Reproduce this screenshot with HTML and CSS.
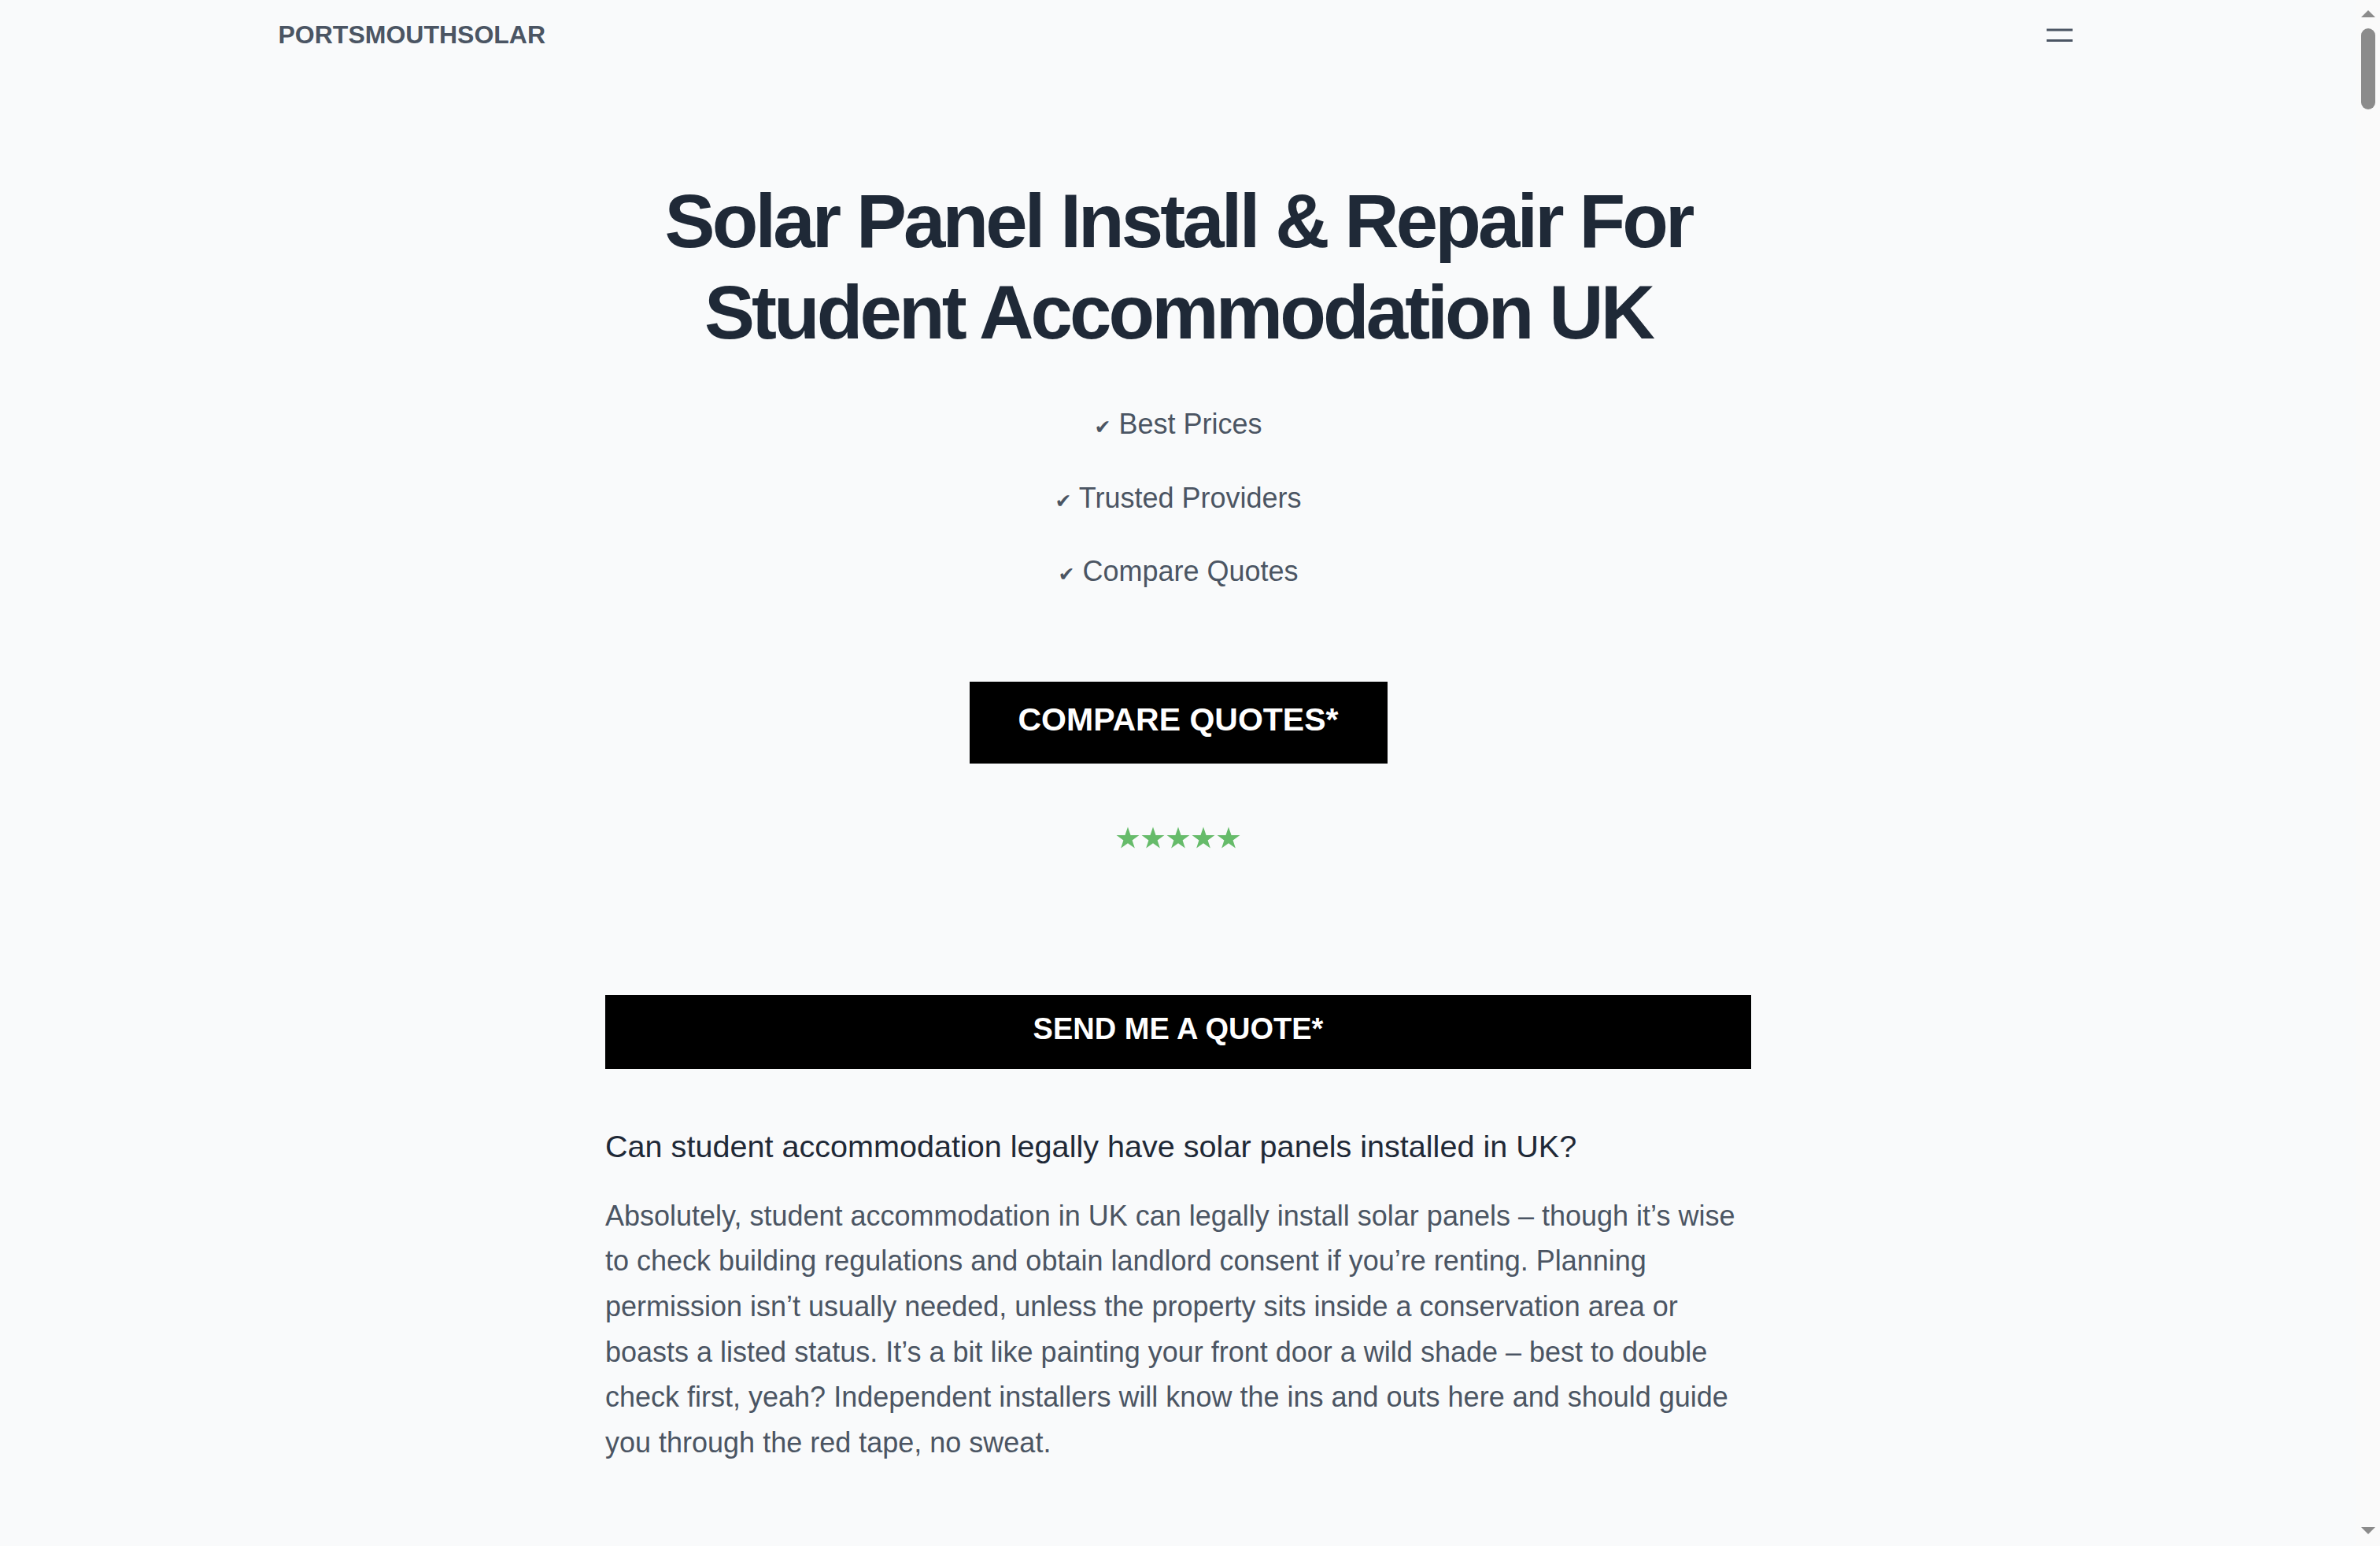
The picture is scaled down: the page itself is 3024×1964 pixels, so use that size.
FILE: index.html
```html
<!DOCTYPE html>
<html lang="en">
<head>
<meta charset="utf-8">
<title>Solar Panel Install &amp; Repair For Student Accommodation UK</title>
<link rel="stylesheet" href="styles.css">
</head>
<body>
<div class="viewport">
  <header class="site-header">
    <nav class="nav">
      <a class="logo" href="#">PORTSMOUTHSOLAR</a>
      <button class="menu-btn" aria-label="Menu">
        <svg class="menu-icon" viewBox="0 0 24 24" fill="none" stroke="currentColor" stroke-width="1.5"><path d="M3.75 9h16.5M3.75 15.75h16.5"/></svg>
      </button>
    </nav>
  </header>
  <main class="page">
    <section class="hero">
      <h1 class="hero-title">Solar Panel Install &amp; Repair For Student Accommodation UK</h1>
      <ul class="perks">
        <li class="perk"><span class="check">✔</span> Best Prices</li>
        <li class="perk"><span class="check">✔</span> Trusted Providers</li>
        <li class="perk"><span class="check">✔</span> Compare Quotes</li>
      </ul>
      <a class="cta" href="#">COMPARE QUOTES*</a>
      <div class="stars" role="img" aria-label="5 out of 5 stars">
        <svg class="star" viewBox="0 0 100 95"><polygon points="50,0 61.8,35.1 98.1,35.1 68.7,56.7 79.4,90.5 50,69.1 20.6,90.5 31.3,56.7 1.9,35.1 38.2,35.1"/></svg>
        <svg class="star" viewBox="0 0 100 95"><polygon points="50,0 61.8,35.1 98.1,35.1 68.7,56.7 79.4,90.5 50,69.1 20.6,90.5 31.3,56.7 1.9,35.1 38.2,35.1"/></svg>
        <svg class="star" viewBox="0 0 100 95"><polygon points="50,0 61.8,35.1 98.1,35.1 68.7,56.7 79.4,90.5 50,69.1 20.6,90.5 31.3,56.7 1.9,35.1 38.2,35.1"/></svg>
        <svg class="star" viewBox="0 0 100 95"><polygon points="50,0 61.8,35.1 98.1,35.1 68.7,56.7 79.4,90.5 50,69.1 20.6,90.5 31.3,56.7 1.9,35.1 38.2,35.1"/></svg>
        <svg class="star" viewBox="0 0 100 95"><polygon points="50,0 61.8,35.1 98.1,35.1 68.7,56.7 79.4,90.5 50,69.1 20.6,90.5 31.3,56.7 1.9,35.1 38.2,35.1"/></svg>
      </div>
    </section>
    <article class="content">
      <a class="quote-bar" href="#">SEND ME A QUOTE*</a>
      <h2 class="question">Can student accommodation legally have solar panels installed in UK?</h2>
      <p class="answer">Absolutely, student accommodation in UK can legally install solar panels – though it’s wise to check building regulations and obtain landlord consent if you’re renting. Planning permission isn’t usually needed, unless the property sits inside a conservation area or boasts a listed status. It’s a bit like painting your front door a wild shade – best to double check first, yeah? Independent installers will know the ins and outs here and should guide you through the red tape, no sweat.</p>
    </article>
  </main>
</div>
<div class="scrollbar" aria-hidden="true">
  <span class="sb-arrow sb-up"></span>
  <span class="sb-thumb"></span>
  <span class="sb-fill"></span>
  <span class="sb-arrow sb-down"></span>
</div>
</body>
</html>
```
FILE: styles.css
```css
html { background: #f9fafb; }
body {
  margin: 0;
  background: #f9fafb;
  font-family: "Liberation Sans", Arial, "DejaVu Sans", sans-serif;
  color: #4b5563;
}
.viewport {
  margin-right: 30px;
  padding-bottom: 400px;
}

/* window scrollbar drawn over the page edge */
.scrollbar {
  position: fixed;
  top: 0;
  right: 0;
  width: 30px;
  height: 100vh;
  background: #fafafa;
  display: flex;
  flex-direction: column;
  align-items: center;
  padding: 13px 0 15px;
  box-sizing: border-box;
}
.sb-arrow {
  width: 0;
  height: 0;
  border-left: 9px solid transparent;
  border-right: 9px solid transparent;
}
.sb-up { border-bottom: 9px solid #8b8b8b; }
.sb-down { border-top: 9px solid #8b8b8b; }
.sb-thumb {
  margin-top: 14px;
  width: 18px;
  height: 103px;
  border-radius: 9px;
  background: #8b8b8b;
}
.sb-fill { flex: 1; }

.site-header { padding-top: 20px; }
.nav {
  width: 2287px;
  margin: 0 auto;
  height: 48px;
  display: flex;
  align-items: center;
  justify-content: space-between;
}
.logo {
  font-size: 32px;
  line-height: 48px;
  font-weight: 700;
  color: #4b5563;
  text-decoration: none;
}
.menu-btn {
  border: 0;
  padding: 0;
  background: none;
  color: #4b5563;
  width: 48px;
  height: 48px;
  display: flex;
}
.menu-icon { width: 48px; height: 48px; }

.hero {
  padding-top: 154.7px;
  display: flex;
  flex-direction: column;
  align-items: center;
  text-align: center;
}
.hero-title {
  margin: 0;
  max-width: 1536px;
  font-size: 96px;
  line-height: 116px;
  font-weight: 700;
  letter-spacing: -3.9px;
  color: #1f2937;
}
.perks {
  list-style: none;
  margin: 56.8px 0 0;
  padding: 0;
  display: flex;
  flex-direction: column;
  align-items: center;
  gap: 37.35px;
}
.perk {
  font-size: 36px;
  line-height: 56px;
  height: 56px;
  color: #4b5563;
}
.check {
  font-family: "DejaVu Sans", sans-serif;
  font-size: 25px;
  line-height: 1;
}
.cta {
  margin-top: 111.8px;
  display: block;
  background: #000;
  color: #fff;
  text-decoration: none;
  font-size: 41px;
  font-weight: 700;
  line-height: 48px;
  padding: 24px 62px 32px;
}
.stars {
  margin-top: 80px;
  display: flex;
  gap: 2px;
  height: 29.3px;
}
.star {
  width: 30px;
  height: 29.3px;
  fill: #66bb6a;
  display: block;
}

.content {
  width: 1456px;
  margin: 0 auto;
  padding-top: 184.7px;
}
.quote-bar {
  display: block;
  background: #000;
  color: #fff;
  text-align: center;
  text-decoration: none;
  font-size: 38px;
  font-weight: 700;
  line-height: 46px;
  padding: 19.8px 0 27.9px;
}
.question {
  margin: 70.45px 0 0;
  font-size: 39.6px;
  line-height: 56px;
  font-weight: 400;
  color: #1f2937;
}
.answer {
  margin: 31.55px 0 0;
  font-size: 36px;
  line-height: 57.7px;
  color: #4b5563;
}
```
